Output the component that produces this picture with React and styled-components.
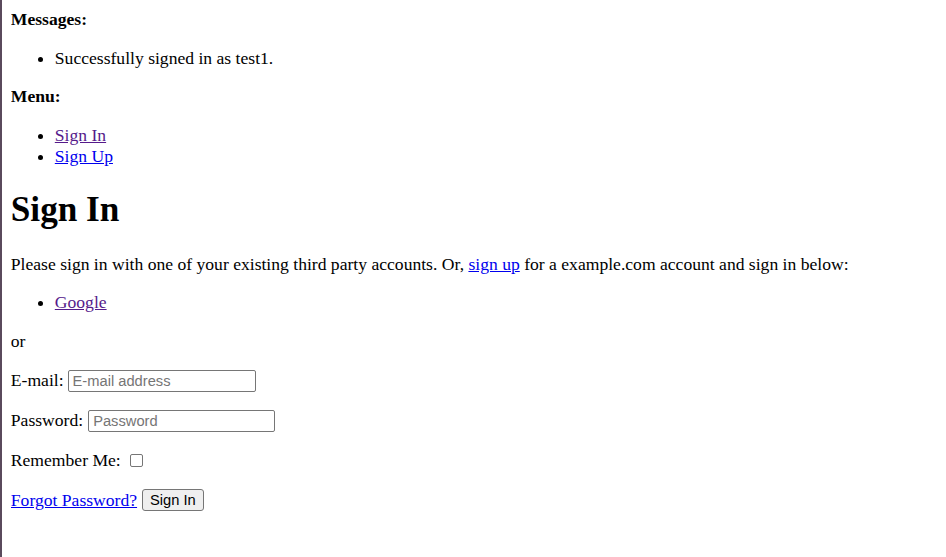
import styled, { createGlobalStyle } from "styled-components";

const GlobalStyle = createGlobalStyle`
  html {
    min-height: 100%;
    border-left: 2px solid #5a4a5c;
    background: #fff;
  }
  body {
    margin: 8.8px;
    font-family: "Liberation Serif", "Times New Roman", serif;
    font-size: 17.6px;
    line-height: 1.2;
    color: #000;
  }
`;

const Section = styled.div``;

const Label = styled.strong`
  font-weight: bold;
`;

const List = styled.ul`
  margin: 17.6px 0;
  padding-left: 44px;
  list-style: disc;
`;

const Item = styled.li``;

const TextLink = styled.a`
  color: ${(p) => (p.$visited ? "#551a8b" : "#0000ee")};
  text-decoration: underline;
  cursor: pointer;
`;

const Title = styled.h1`
  font-size: 35.2px;
  font-weight: bold;
  margin: 21.6px 0 22.6px;
  line-height: 1.2;
`;

const Para = styled.p`
  margin: 17.6px 0;
`;

const Field = styled.p`
  margin: 17.6px 0;
  min-height: 22.2px;
  display: flex;
  align-items: center;
  gap: 4px;
`;

const TextInput = styled.input`
  box-sizing: border-box;
  width: ${(p) => p.$w || 188}px;
  height: 22px;
  padding: 1px 4px;
  margin-left: ${(p) => p.$shift || 0}px;
  border: 1px solid #767676;
  border-radius: 2px;
  font-family: "Liberation Sans", Arial, sans-serif;
  font-size: 14.7px;
  color: #000;
  background: #fff;
  &::placeholder {
    color: #757575;
  }
`;

const Check = styled.span`
  display: inline-block;
  box-sizing: border-box;
  width: 13px;
  height: 13px;
  margin-left: 5px;
  border: 1px solid #767676;
  border-radius: 2px;
  background: #fff;
`;

const Button = styled.button`
  box-sizing: border-box;
  height: 22px;
  margin-left: 1px;
  padding: 0 7px;
  border: 1px solid #767676;
  border-radius: 3px;
  background: #efefef;
  font-family: "Liberation Sans", Arial, sans-serif;
  font-size: 14.7px;
  color: #000;
`;

export default function App() {
  return (
    <>
      <GlobalStyle />
      <Section>
        <Label>Messages:</Label>
        <List>
          <Item>Successfully signed in as test1.</Item>
        </List>
      </Section>
      <Section>
        <Label>Menu:</Label>
        <List>
          <Item>
            <TextLink $visited>Sign In</TextLink>
          </Item>
          <Item>
            <TextLink>Sign Up</TextLink>
          </Item>
        </List>
      </Section>
      <Title>Sign In</Title>
      <Para>
        Please sign in with one of your existing third party accounts. Or,{" "}
        <TextLink>sign up</TextLink> for a example.com account and sign in below:
      </Para>
      <List>
        <Item>
          <TextLink $visited>Google</TextLink>
        </Item>
      </List>
      <Para>or</Para>
      <form onSubmit={(e) => e.preventDefault()}>
        <Field>
          E-mail: <TextInput type="email" placeholder="E-mail address" $w={188} />
        </Field>
        <Field>
          Password: <TextInput type="password" placeholder="Password" $w={187} $shift={1} />
        </Field>
        <Field>
          Remember Me: <Check />
        </Field>
        <Field>
          <TextLink>Forgot Password?</TextLink>
          <Button type="submit">Sign In</Button>
        </Field>
      </form>
    </>
  );
}
